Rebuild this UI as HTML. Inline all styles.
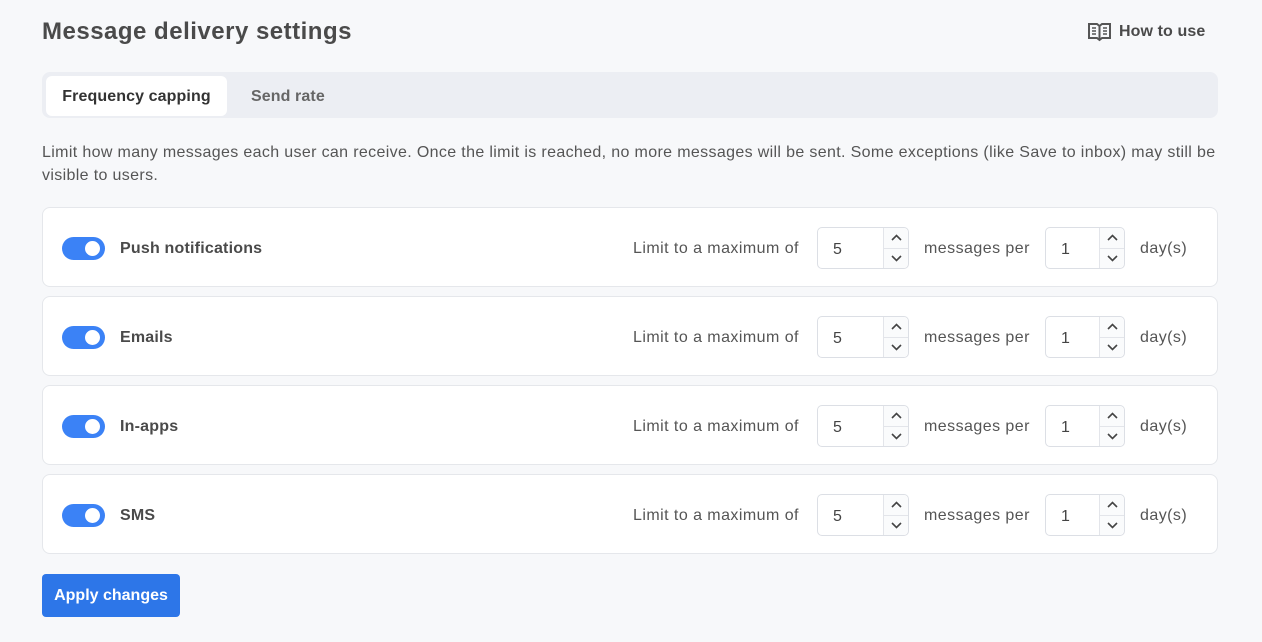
<!DOCTYPE html>
<html><head><style>
*{box-sizing:border-box;margin:0;padding:0}
body{width:1262px;height:642px;background:#f7f8fa;font-family:"Liberation Sans",sans-serif;color:#4b4b4b;position:relative;overflow:hidden;letter-spacing:0.45px}
.abs{position:absolute}
h1{position:absolute;left:42px;top:18px;font-size:24px;font-weight:bold;color:#4a4a4a;letter-spacing:0.5px}
.how{left:1088px;top:22px;font-size:16px;font-weight:bold;color:#4a4a4a;display:flex;align-items:center;gap:8px;letter-spacing:0.1px}
.tabs{left:42px;top:72px;width:1176px;height:46px;background:#eceef3;border-radius:8px}
.tab{position:absolute;top:5px;height:40px;line-height:40px;font-size:16px;font-weight:bold;color:#666;letter-spacing:0.1px}
.tab.on{top:4px;left:4px;width:181px;background:#fff;border-radius:6px;text-align:center;color:#333;line-height:42px}
.desc{left:42px;top:141px;width:1180px;font-size:16px;line-height:23px;color:#555;letter-spacing:0.35px}
.card{position:absolute;left:42px;width:1176px;height:80px;background:#fff;border:1px solid #e5e7eb;border-radius:8px}
.tg{position:absolute;left:19px;top:29px;width:43px;height:23px;border-radius:12px;background:#3b82f6}
.tg:after{content:"";position:absolute;right:5px;top:4px;width:15px;height:15px;border-radius:50%;background:#fff}
.lbl{position:absolute;left:77px;top:32px;font-size:16px;font-weight:bold;color:#4a4a4a;letter-spacing:0.2px}
.t{position:absolute;top:32px;font-size:16px;color:#555}
.inp{position:absolute;top:19px;height:42px;border:1px solid #dcdfe5;border-radius:5px;background:#fff}
.inp span{position:absolute;left:15px;top:13px;font-size:16px;color:#444}
.sp{position:absolute;right:0;top:0;width:25px;height:40px;border-left:1px solid #e3e5ea;background:#fafbfc;border-radius:0 5px 5px 0}
.sp:before{content:"";position:absolute;left:0;right:0;top:20px;border-top:1px solid #e3e5ea}
.sp svg{position:absolute;left:7px}
.btn{left:42px;top:574px;width:138px;height:43px;background:#2d76e8;border-radius:4px;color:#fff;font-size:16px;font-weight:bold;text-align:center;line-height:43px;letter-spacing:0}
</style></head><body>
<h1>Message delivery settings</h1>
<div class="abs how"><svg width="23" height="20" viewBox="0 0 23 20" fill="none" stroke="#555" stroke-width="2"><path d="M1 2h8l2.5 2 2.5-2h8v14h-8l-2.5 2-2.5-2H1z M11.5 4v14"/><path d="M4 6h4M4 9h4M4 12h4M15 6h4M15 9h4M15 12h4" stroke-width="1.5"/></svg>How to use</div>
<div class="abs tabs"><div class="tab on">Frequency capping</div><div class="tab" style="left:209px">Send rate</div></div>
<div class="abs desc">Limit how many messages each user can receive. Once the limit is reached, no more messages will be sent. Some exceptions (like Save to inbox) may still be visible to users.</div>

<div class="card" style="top:207px"><div class="tg"></div><div class="lbl">Push notifications</div>
<div class="t" style="left:590px">Limit to a maximum of</div>
<div class="inp" style="left:774px;width:92px"><span>5</span><div class="sp"><svg style="top:6px" width="11" height="7"><path d="M1 6l4.5-4.5L10 6" fill="none" stroke="#444" stroke-width="1.6"/></svg><svg style="top:27px" width="11" height="7"><path d="M1 1l4.5 4.5L10 1" fill="none" stroke="#444" stroke-width="1.6"/></svg></div></div>
<div class="t" style="left:881px">messages per</div>
<div class="inp" style="left:1002px;width:80px"><span>1</span><div class="sp"><svg style="top:6px" width="11" height="7"><path d="M1 6l4.5-4.5L10 6" fill="none" stroke="#444" stroke-width="1.6"/></svg><svg style="top:27px" width="11" height="7"><path d="M1 1l4.5 4.5L10 1" fill="none" stroke="#444" stroke-width="1.6"/></svg></div></div>
<div class="t" style="left:1097px">day(s)</div></div>

<div class="card" style="top:296px"><div class="tg"></div><div class="lbl">Emails</div>
<div class="t" style="left:590px">Limit to a maximum of</div>
<div class="inp" style="left:774px;width:92px"><span>5</span><div class="sp"><svg style="top:6px" width="11" height="7"><path d="M1 6l4.5-4.5L10 6" fill="none" stroke="#444" stroke-width="1.6"/></svg><svg style="top:27px" width="11" height="7"><path d="M1 1l4.5 4.5L10 1" fill="none" stroke="#444" stroke-width="1.6"/></svg></div></div>
<div class="t" style="left:881px">messages per</div>
<div class="inp" style="left:1002px;width:80px"><span>1</span><div class="sp"><svg style="top:6px" width="11" height="7"><path d="M1 6l4.5-4.5L10 6" fill="none" stroke="#444" stroke-width="1.6"/></svg><svg style="top:27px" width="11" height="7"><path d="M1 1l4.5 4.5L10 1" fill="none" stroke="#444" stroke-width="1.6"/></svg></div></div>
<div class="t" style="left:1097px">day(s)</div></div>

<div class="card" style="top:385px"><div class="tg"></div><div class="lbl">In-apps</div>
<div class="t" style="left:590px">Limit to a maximum of</div>
<div class="inp" style="left:774px;width:92px"><span>5</span><div class="sp"><svg style="top:6px" width="11" height="7"><path d="M1 6l4.5-4.5L10 6" fill="none" stroke="#444" stroke-width="1.6"/></svg><svg style="top:27px" width="11" height="7"><path d="M1 1l4.5 4.5L10 1" fill="none" stroke="#444" stroke-width="1.6"/></svg></div></div>
<div class="t" style="left:881px">messages per</div>
<div class="inp" style="left:1002px;width:80px"><span>1</span><div class="sp"><svg style="top:6px" width="11" height="7"><path d="M1 6l4.5-4.5L10 6" fill="none" stroke="#444" stroke-width="1.6"/></svg><svg style="top:27px" width="11" height="7"><path d="M1 1l4.5 4.5L10 1" fill="none" stroke="#444" stroke-width="1.6"/></svg></div></div>
<div class="t" style="left:1097px">day(s)</div></div>

<div class="card" style="top:474px"><div class="tg"></div><div class="lbl">SMS</div>
<div class="t" style="left:590px">Limit to a maximum of</div>
<div class="inp" style="left:774px;width:92px"><span>5</span><div class="sp"><svg style="top:6px" width="11" height="7"><path d="M1 6l4.5-4.5L10 6" fill="none" stroke="#444" stroke-width="1.6"/></svg><svg style="top:27px" width="11" height="7"><path d="M1 1l4.5 4.5L10 1" fill="none" stroke="#444" stroke-width="1.6"/></svg></div></div>
<div class="t" style="left:881px">messages per</div>
<div class="inp" style="left:1002px;width:80px"><span>1</span><div class="sp"><svg style="top:6px" width="11" height="7"><path d="M1 6l4.5-4.5L10 6" fill="none" stroke="#444" stroke-width="1.6"/></svg><svg style="top:27px" width="11" height="7"><path d="M1 1l4.5 4.5L10 1" fill="none" stroke="#444" stroke-width="1.6"/></svg></div></div>
<div class="t" style="left:1097px">day(s)</div></div>

<div class="abs btn">Apply changes</div>
</body></html>
